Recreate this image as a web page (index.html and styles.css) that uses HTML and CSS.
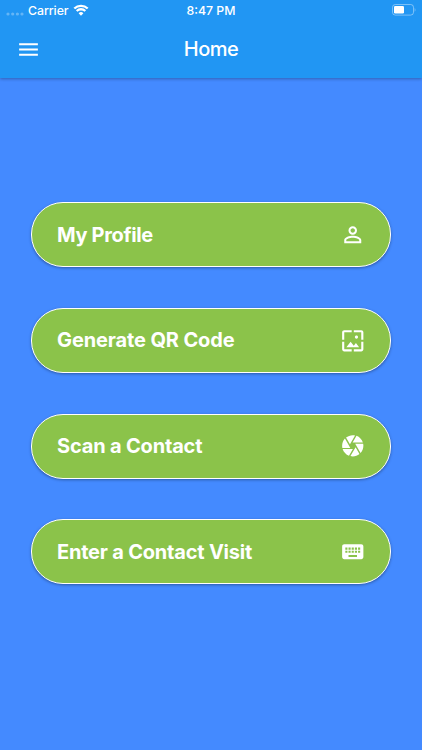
FILE: index.html
```html
<!DOCTYPE html>
<html lang="en">
<head>
    <meta charset="UTF-8">
    <meta name="viewport" content="width=device-width, initial-scale=1.0">
    <title>Home</title>
    <link rel="stylesheet" href="styles.css">
</head>
<body>
    <header class="app-header">
        <div class="status-bar">
            <div class="carrier">
                <svg class="signal" viewBox="0 0 18 4">
                    <circle cx="2" cy="2" r="1.6"/>
                    <circle cx="6.7" cy="2" r="1.6"/>
                    <circle cx="11.4" cy="2" r="1.6"/>
                    <circle cx="16" cy="2" r="1.6"/>
                </svg>
                <span class="carrier-name">Carrier</span>
                <svg class="wifi" viewBox="0 0 16 12">
                    <path d="M1.3 4.5a9.6 9.6 0 0 1 13.4 0M3.7 7a6.2 6.2 0 0 1 8.6 0"/>
                    <path class="wifi-dot" d="M8 11.7 5.6 9.3a3.4 3.4 0 0 1 4.8 0z"/>
                </svg>
            </div>
            <span class="clock">8:47 PM</span>
            <svg class="battery" viewBox="0 0 24 12">
                <rect class="battery-case" x=".5" y=".5" width="21" height="10.6" rx="2.8"/>
                <rect class="battery-level" x="2" y="2" width="10" height="7.6" rx="1.3"/>
                <path class="battery-tip" d="M22.6 4v3.8c1.2-.5 1.2-3.3 0-3.8z"/>
            </svg>
        </div>
        <div class="toolbar">
            <button class="menu-btn" aria-label="Menu">
                <svg viewBox="0 0 24 24"><path d="M3 18h18v-2H3v2zm0-5h18v-2H3v2zm0-7v2h18V6H3z"/></svg>
            </button>
            <h1>Home</h1>
        </div>
    </header>

    <main class="menu">
        <button class="menu-item">
            <span class="label profile">My Profile</span>
            <svg viewBox="0 0 24 24"><path d="M12 5.9c1.16 0 2.1.94 2.1 2.1s-.94 2.1-2.1 2.1S9.9 9.16 9.9 8s.94-2.1 2.1-2.1m0 9c2.97 0 6.1 1.46 6.1 2.1v1.1H5.9V17c0-.64 3.13-2.1 6.1-2.1M12 4C9.79 4 8 5.79 8 8s1.79 4 4 4 4-1.79 4-4-1.79-4-4-4zm0 9c-2.67 0-8 1.34-8 4v3h16v-3c0-2.66-5.33-4-8-4z"/></svg>
        </button>
        <button class="menu-item">
            <span class="label generate">Generate QR Code</span>
            <svg viewBox="0 0 24 24"><path d="M4 4h7V2H4c-1.1 0-2 .9-2 2v7h2V4zm6 9l-4 5h12l-3-4-2.03 2.71L10 13zm7-4.5c0-.83-.67-1.5-1.5-1.5S14 7.67 14 8.5s.67 1.5 1.5 1.5S17 9.33 17 8.5zM20 2h-7v2h7v7h2V4c0-1.1-.9-2-2-2zm0 18h-7v2h7c1.1 0 2-.9 2-2v-7h-2v7zM4 13H2v7c0 1.1.9 2 2 2h7v-2H4v-7z"/></svg>
        </button>
        <button class="menu-item">
            <span class="label scan">Scan a Contact</span>
            <svg viewBox="0 0 24 24"><path d="M9.4 10.5l4.77-8.26C13.47 2.09 12.75 2 12 2c-2.4 0-4.6.85-6.32 2.25l3.66 6.35.06-.1zM21.54 9c-.92-2.92-3.15-5.26-6-6.34L11.88 9h9.66zm.26 1h-7.49l.29.5 4.76 8.25C21 16.97 22 14.61 22 12c0-.69-.07-1.35-.2-2zM8.54 12l-3.9-6.75C3.01 7.03 2 9.39 2 12c0 .69.07 1.35.2 2h7.49l-1.15-2zm-6.08 3c.92 2.92 3.15 5.26 6 6.34L12.12 15H2.46zm11.27 0l-3.9 6.76c.7.15 1.42.24 2.17.24 2.4 0 4.6-.85 6.32-2.25l-3.66-6.35-.93 1.6z"/></svg>
        </button>
        <button class="menu-item">
            <span class="label visit">Enter a Contact Visit</span>
            <svg viewBox="0 0 24 24"><path d="M20 5H4c-1.1 0-1.99.9-1.99 2L2 17c0 1.1.9 2 2 2h16c1.1 0 2-.9 2-2V7c0-1.1-.9-2-2-2zm-9 3h2v2h-2V8zm0 3h2v2h-2v-2zM8 8h2v2H8V8zm0 3h2v2H8v-2zm-1 2H5v-2h2v2zm0-3H5V8h2v2zm9 7H8v-2h8v2zm0-4h-2v-2h2v2zm0-3h-2V8h2v2zm3 3h-2v-2h2v2zm0-3h-2V8h2v2z"/></svg>
        </button>
    </main>
</body>
</html>
```
FILE: styles.css
```css
* {
    box-sizing: border-box;
}

body {
    margin: 0;
    height: 750px;
    display: flex;
    flex-direction: column;
    overflow: hidden;
    font-family: Inter, "Liberation Sans", sans-serif;
    color: white;
    background-color: #448aff;
}

button {
    border: none;
    background: none;
    color: inherit;
    font-family: inherit;
    cursor: pointer;
}

svg {
    display: block;
    fill: white;
}

.app-header {
    height: 78px;
    background-color: #2196f3;
    box-shadow: 0 1px 3px rgba(0,0,0,0.3);
}

.status-bar {
    display: grid;
    grid-template-columns: 1fr auto 1fr;
    align-items: center;
    height: 20px;
    padding: 0 6px;
    font-size: 12.3px;
    font-weight: 500;
}

.carrier {
    display: flex;
    align-items: center;
}

.signal {
    width: 18px;
    height: 4px;
    margin: 7px 4px 0 0;
    opacity: 0.3;
}

.carrier-name {
    letter-spacing: -0.05px;
}

.wifi {
    width: 16px;
    height: 12px;
    margin-left: 4px;
    stroke: white;
    stroke-width: 2.3;
    fill: none;
}

.wifi-dot {
    fill: white;
    stroke: none;
}

.battery {
    width: 24px;
    height: 12px;
    justify-self: end;
}

.battery-case {
    fill: none;
    stroke: white;
    stroke-opacity: 0.4;
}

.battery-tip {
    fill-opacity: 0.4;
}

.toolbar {
    display: grid;
    grid-template-columns: 57px 1fr 57px;
    align-items: center;
    height: 58px;
}

.menu-btn {
    padding: 0 0 0 16px;
}

.menu-btn svg {
    width: 25px;
    height: 25px;
}

h1 {
    margin: 0;
    font-size: 20px;
    font-weight: 500;
    letter-spacing: -0.5px;
    text-align: center;
}

.menu {
    flex: 1;
    display: flex;
    flex-direction: column;
    justify-content: center;
    gap: 40.8px;
    padding: 0 31px 41.6px;
}

.menu-item {
    display: flex;
    align-items: center;
    justify-content: space-between;
    height: 65px;
    padding: 0 25px;
    border: 1px solid white;
    border-radius: 32px;
    background-color: #8bc34a;
    box-shadow: 0 1px 3px rgba(0,0,0,0.35);
    font-size: 20px;
    font-weight: 700;
}

.menu-item svg {
    width: 25.5px;
    height: 25.5px;
}

.profile {
    letter-spacing: -0.35px;
}

.generate {
    letter-spacing: -0.13px;
}

.scan {
    letter-spacing: -0.18px;
}

.visit {
    letter-spacing: -0.21px;
}
```
